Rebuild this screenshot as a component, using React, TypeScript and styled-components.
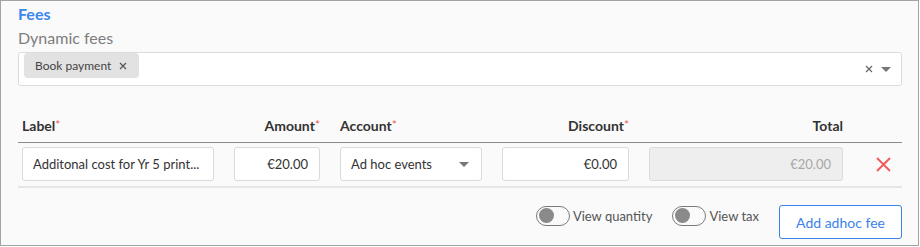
import React from "react";
import styled, { createGlobalStyle } from "styled-components";

const Global = createGlobalStyle`
  html, body { margin: 0; padding: 0; background: #ffffff; }
  body { font-family: Lato, "Open Sans", sans-serif; }
  * { box-sizing: border-box; }
`;

const Panel = styled.section`
  width: 919px;
  height: 246px;
  border: 1px solid #a3a3a3;
  background: #fafafa;
  padding: 3px 16px 0 17px;
  display: flex;
  flex-direction: column;
`;

const Title = styled.h2`
  margin: 0;
  font-size: 16px;
  line-height: 20px;
  font-weight: 700;
  color: #3987ef;
`;

const Subtitle = styled.div`
  margin-top: 4px;
  font-size: 16px;
  line-height: 20px;
  color: #7d7d7d;
`;

const MultiSelect = styled.div`
  margin-top: 4px;
  height: 34px;
  background: #fff;
  border: 1px solid #dcdcdc;
  border-radius: 3px;
  display: flex;
  align-items: flex-start;
  padding: 0 10px 0 5px;
`;

const Chip = styled.span`
  height: 25px;
  display: inline-flex;
  align-items: center;
  gap: 8px;
  padding: 0 12px 0 11px;
  background: #e2e2e2;
  border-radius: 4px;
  font-size: 12px;
  color: #444;
`;

const SelectIcons = styled.div`
  margin-left: auto;
  align-self: center;
  display: flex;
  align-items: center;
  gap: 8px;
`;

const Table = styled.div`
  margin-top: 30px;
  width: 884px;
`;

const GridRow = styled.div<{ $head?: boolean }>`
  display: grid;
  grid-template-columns: 192px 86px 142px 127px 194px 1fr;
  column-gap: 20px;
  align-items: center;
  padding: ${(p) => (p.$head ? "0 4px 6px 4px" : "4px 0 5px 4px")};
  border-bottom: ${(p) => (p.$head ? "1px solid #8a8a8a" : "2px solid #e6e6e6")};
`;

const Head = styled.div<{ $right?: boolean }>`
  font-size: 14px;
  line-height: 20px;
  font-weight: 700;
  color: #333;
  text-align: ${(p) => (p.$right ? "right" : "left")};
`;

const Req = styled.span`
  color: #f05a5a;
  font-weight: 400;
  font-size: 12px;
  vertical-align: top;
  position: relative;
  top: -1px;
`;

const Field = styled.div<{ $right?: boolean; $disabled?: boolean }>`
  height: 34px;
  border: 1px solid #dadada;
  border-radius: 3px;
  background: ${(p) => (p.$disabled ? "#eeeeee" : "#ffffff")};
  color: ${(p) => (p.$disabled ? "#a8a8a8" : "#333")};
  font-size: 13px;
  display: flex;
  align-items: center;
  justify-content: ${(p) => (p.$right ? "flex-end" : "flex-start")};
  padding: 0 11px 0 10px;
  white-space: nowrap;
  overflow: hidden;
`;

const SelectField = styled(Field)`
  justify-content: space-between;
  padding: 0 12px 0 10px;
`;

const DeleteCell = styled.div`
  display: flex;
  justify-content: center;
  padding-left: 1px;
`;

const Footer = styled.div`
  margin-top: 17px;
  display: flex;
  justify-content: flex-end;
  align-items: center;
  gap: 20px;
`;

const ToggleWrap = styled.label`
  display: flex;
  align-items: center;
  gap: 3px;
  font-size: 13px;
  color: #555;
  margin-top: -13px;
`;

const Track = styled.span`
  width: 34px;
  height: 20px;
  border: 1px solid #7a7a7a;
  border-radius: 10px;
  display: flex;
  align-items: center;
  padding-left: 2px;
  background: #fafafa;
`;

const Knob = styled.span`
  width: 15px;
  height: 15px;
  border-radius: 50%;
  background: #8a8a8a;
`;

const Button = styled.button`
  height: 34px;
  width: 123px;
  border: 1px solid #3b82e8;
  border-radius: 3px;
  background: #fff;
  color: #3b82e8;
  font-family: Lato, sans-serif;
  font-size: 14px;
  padding: 0;
`;

const Caret = () => (
  <svg width="10" height="5" viewBox="0 0 10 5">
    <path d="M0 0 L10 0 L5 5 Z" fill="#777" />
  </svg>
);

const SmallX = ({ color = "#666" }: { color?: string }) => (
  <svg width="8" height="8" viewBox="0 0 8 8">
    <path d="M1 1 L7 7 M7 1 L1 7" stroke={color} strokeWidth="1.2" />
  </svg>
);

const Toggle = ({ label }: { label: string }) => (
  <ToggleWrap>
    <Track>
      <Knob />
    </Track>
    {label}
  </ToggleWrap>
);

export default function App() {
  return (
    <>
      <Global />
      <Panel>
        <Title>Fees</Title>
        <Subtitle>Dynamic fees</Subtitle>
        <MultiSelect>
          <Chip>
            Book payment <SmallX color="#555" />
          </Chip>
          <SelectIcons>
            <SmallX />
            <Caret />
          </SelectIcons>
        </MultiSelect>
        <Table>
          <GridRow $head>
            <Head>
              Label<Req>*</Req>
            </Head>
            <Head $right>
              Amount<Req>*</Req>
            </Head>
            <Head>
              Account<Req>*</Req>
            </Head>
            <Head $right>
              Discount<Req>*</Req>
            </Head>
            <Head $right>Total</Head>
            <Head />
          </GridRow>
          <GridRow>
            <Field>Additonal cost for Yr 5 print...</Field>
            <Field $right>€20.00</Field>
            <SelectField>
              Ad hoc events
              <Caret />
            </SelectField>
            <Field $right>€0.00</Field>
            <Field $right $disabled>
              €20.00
            </Field>
            <DeleteCell>
              <svg width="15" height="15" viewBox="0 0 15 15">
                <path d="M1 1 L14 14 M14 1 L1 14" stroke="#f25757" strokeWidth="1.8" />
              </svg>
            </DeleteCell>
          </GridRow>
        </Table>
        <Footer>
          <Toggle label="View quantity" />
          <Toggle label="View tax" />
          <Button>Add adhoc fee</Button>
        </Footer>
      </Panel>
    </>
  );
}
